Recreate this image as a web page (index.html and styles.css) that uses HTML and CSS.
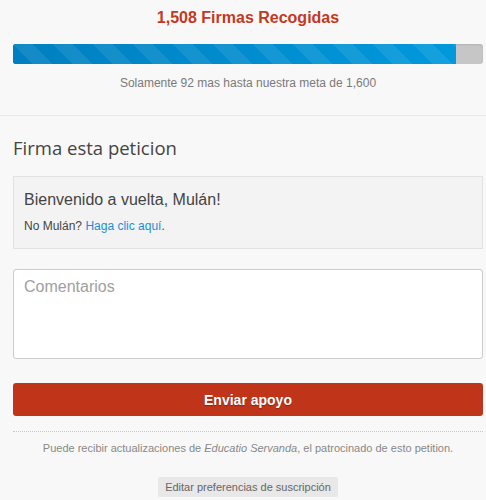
FILE: index.html
```html
<!DOCTYPE html>
<html lang="es">
<head>
  <meta charset="UTF-8">
  <title>Firma esta peticion</title>
  <link rel="stylesheet" href="styles.css">
</head>
<body>

<div class="progress-block">
  <div class="count">1,508 Firmas Recogidas</div>
  <div class="progress">
    <div class="bar" style="width: 94.25%"></div>
  </div>
  <div class="goal">Solamente 92 mas hasta nuestra meta de 1,600</div>
</div>

<div class="sign-block">
  <h2>Firma esta peticion</h2>

  <div class="welcome">
    <div class="welcome-title">Bienvenido a vuelta, Mulán!</div>
    <div class="welcome-note">No Mulán? <a href="#">Haga clic aquí</a>.</div>
  </div>

  <textarea class="comments" placeholder="Comentarios"></textarea>

  <button class="submit">Enviar apoyo</button>

  <p class="notice">Puede recibir actualizaciones de <em>Educatio Servanda</em>, el patrocinado de esto petition.</p>

  <div class="prefs">
    <button class="prefs-btn">Editar preferencias de suscripción</button>
  </div>
</div>

</body>
</html>
```

FILE: styles.css
```css
body {
  margin: 0;
  background: #f8f8f8;
  font-family: 'Liberation Sans', Arial, sans-serif;
  color: #444;
}

.progress-block {
  padding: 8px 3px 25px 13px;
  border-bottom: 1px solid #e8e8e8;
  text-align: center;
}

.count {
  color: #c4381d;
  font-size: 16px;
  font-weight: bold;
  line-height: 20px;
}

.progress {
  height: 20px;
  margin-top: 16px;
  background: #c6c6c6;
  border-radius: 3px;
  overflow: hidden;
  box-shadow: inset 0 1px 2px rgba(0, 0, 0, 0.1);
}

.bar {
  height: 100%;
  background-color: #0a8acb;
  background-image:
    linear-gradient(45deg, rgba(255, 255, 255, 0.08) 25%, transparent 25%, transparent 50%, rgba(255, 255, 255, 0.08) 50%, rgba(255, 255, 255, 0.08) 75%, transparent 75%, transparent),
    linear-gradient(to right, #007fc0, #0099dc);
  background-size: 40px 40px, 100% 100%;
}

.goal {
  margin-top: 12px;
  font-size: 12px;
  color: #7a7a7a;
}

.sign-block {
  padding: 0 3px 0 13px;
}

h2 {
  margin: 19px 0 16px;
  font-family: 'Open Sans', sans-serif;
  font-size: 18.5px;
  font-weight: normal;
  color: #444;
}

.welcome {
  background: #f3f3f3;
  border: 1px solid #e2e2e2;
  padding: 14px 10px 15px;
}

.welcome-title {
  font-size: 16px;
  color: #444;
}

.welcome-note {
  margin-top: 10px;
  font-size: 12px;
  color: #444;
}

.welcome-note a {
  color: #1a8fd8;
  text-decoration: none;
}

.comments {
  display: block;
  box-sizing: border-box;
  width: 100%;
  height: 90px;
  margin-top: 20px;
  padding: 8px 10px;
  border: 1px solid #ccc;
  border-radius: 3px;
  background: #fff;
  font-family: 'Liberation Sans', Arial, sans-serif;
  font-size: 16px;
  resize: none;
}

.comments::placeholder {
  color: #a0a0a0;
}

.submit {
  display: block;
  width: 100%;
  height: 33px;
  margin-top: 24px;
  border: none;
  border-radius: 3px;
  background: #c0341a;
  color: #fff;
  font-family: 'Liberation Sans', Arial, sans-serif;
  font-size: 14px;
  font-weight: bold;
  text-shadow: 0 1px 1px rgba(0, 0, 0, 0.3);
  cursor: pointer;
}

.notice {
  margin: 15px 0 0;
  padding-top: 10px;
  border-top: 1px dotted #c8c8c8;
  font-size: 11px;
  color: #888;
  text-align: center;
}

.prefs {
  margin-top: 23px;
  text-align: center;
}

.prefs-btn {
  border: none;
  border-radius: 2px;
  background: #e8e8e8;
  color: #666;
  padding: 4px 7px;
  font-family: 'Liberation Sans', Arial, sans-serif;
  font-size: 11px;
}
```
